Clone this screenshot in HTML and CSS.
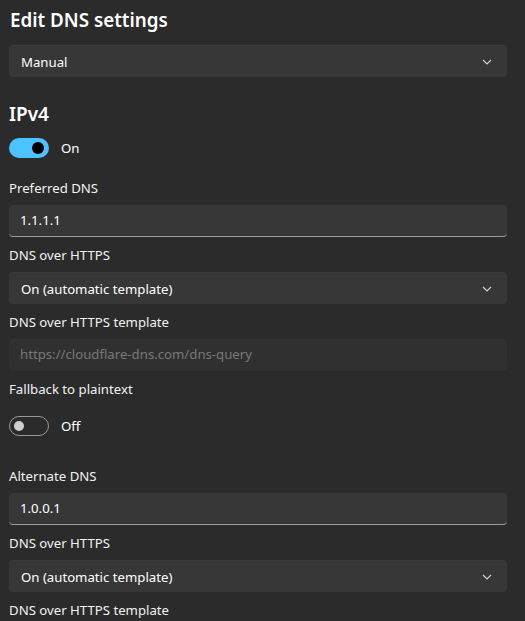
FILE: index.html
```html
<!DOCTYPE html>
<html lang="en">
<head>
	<meta charset="UTF-8">
	<title>Edit DNS settings</title>
	<link rel="stylesheet" href="styles.css">
</head>
<body>
	<div class="panel">
		<h1 class="title">Edit DNS settings</h1>
		<div class="combo combo-mode">
			<span>Manual</span>
			<svg class="chevron" width="10" height="6" viewBox="0 0 10 6"><polyline points="1,1 5,5 9,1" fill="none" stroke="#d0d0d0" stroke-width="1.2"/></svg>
		</div>

		<h2 class="section">IPv4</h2>
		<div class="switch-row">
			<span class="switch on"><span class="knob"></span></span>
			<span class="switch-text">On</span>
		</div>

		<div class="label first">Preferred DNS</div>
		<div class="textbox">1.1.1.1</div>
		<div class="label">DNS over HTTPS</div>
		<div class="combo">
			<span>On (automatic template)</span>
			<svg class="chevron" width="10" height="6" viewBox="0 0 10 6"><polyline points="1,1 5,5 9,1" fill="none" stroke="#d0d0d0" stroke-width="1.2"/></svg>
		</div>
		<div class="label">DNS over HTTPS template</div>
		<div class="textbox disabled">https://cloudflare-dns.com/dns-query</div>
		<div class="label">Fallback to plaintext</div>
		<div class="switch-row fallback">
			<span class="switch off"><span class="knob"></span></span>
			<span class="switch-text">Off</span>
		</div>

		<div class="label alternate">Alternate DNS</div>
		<div class="textbox">1.0.0.1</div>
		<div class="label">DNS over HTTPS</div>
		<div class="combo">
			<span>On (automatic template)</span>
			<svg class="chevron" width="10" height="6" viewBox="0 0 10 6"><polyline points="1,1 5,5 9,1" fill="none" stroke="#d0d0d0" stroke-width="1.2"/></svg>
		</div>
		<div class="label">DNS over HTTPS template</div>
	</div>
</body>
</html>
```

FILE: styles.css
```css
body {
	margin: 0px;
	background-color: #2b2b2b;
	color: #ffffff;
	font-family: "Noto Sans", "Open Sans", sans-serif;
	font-size: 13.2px;
	overflow: hidden;
}
.panel{
	display: flex;
	flex-direction: column;
	width: 498px;
	padding: 6px 0px 0px 9px;
}
.title{
	margin: 0px 0px 11px 1px;
	font-size: 18.8px;
	font-weight: 600;
	line-height: 28px;
}
.section{
	margin: 23px 0px 10px 0px;
	font-size: 19px;
	font-weight: 600;
	line-height: 28px;
}

/* dropdowns */
.combo{
	display: flex;
	align-items: center;
	justify-content: space-between;
	box-sizing: border-box;
	height: 32px;
	padding: 0px 15px 0px 12px;
	border-radius: 4px;
	border-top: 1px solid #3c3c3c;
	background-color: #373737;
	margin-bottom: 8px;
}
.combo-mode{
	margin-bottom: 0px;
}
.chevron{
	display: block;
}

/* text boxes */
.textbox{
	box-sizing: border-box;
	height: 32px;
	line-height: 30px;
	padding: 0px 11px;
	border-radius: 4px;
	background-color: #373737;
	border-bottom: 1px solid #9e9e9e;
	margin-bottom: 8px;
}
.textbox.disabled{
	background-color: #303030;
	border-bottom-color: #303030;
	color: #787878;
}

.label{
	line-height: 20px;
	margin-bottom: 7px;
	color: #f2f2f2;
}
.label.first{
	margin-top: 20px;
}
.label.alternate{
	margin-top: 30px;
}

/* toggle switches */
.switch-row{
	display: flex;
	align-items: center;
	height: 20px;
}
.switch-row.fallback{
	margin-top: 10px;
}
.switch{
	display: flex;
	align-items: center;
	box-sizing: border-box;
	width: 40px;
	height: 20px;
	border-radius: 10px;
}
.switch.on{
	background-color: #4cc2ff;
	justify-content: flex-end;
	padding-right: 5px;
}
.switch.on .knob{
	width: 12px;
	height: 12px;
	border-radius: 6px;
	background-color: #000000;
}
.switch.off{
	border: 1px solid #9a9a9a;
	padding-left: 4px;
}
.switch.off .knob{
	width: 10px;
	height: 10px;
	border-radius: 5px;
	background-color: #cfcfcf;
}
.switch-text{
	margin-left: 12px;
}
```
